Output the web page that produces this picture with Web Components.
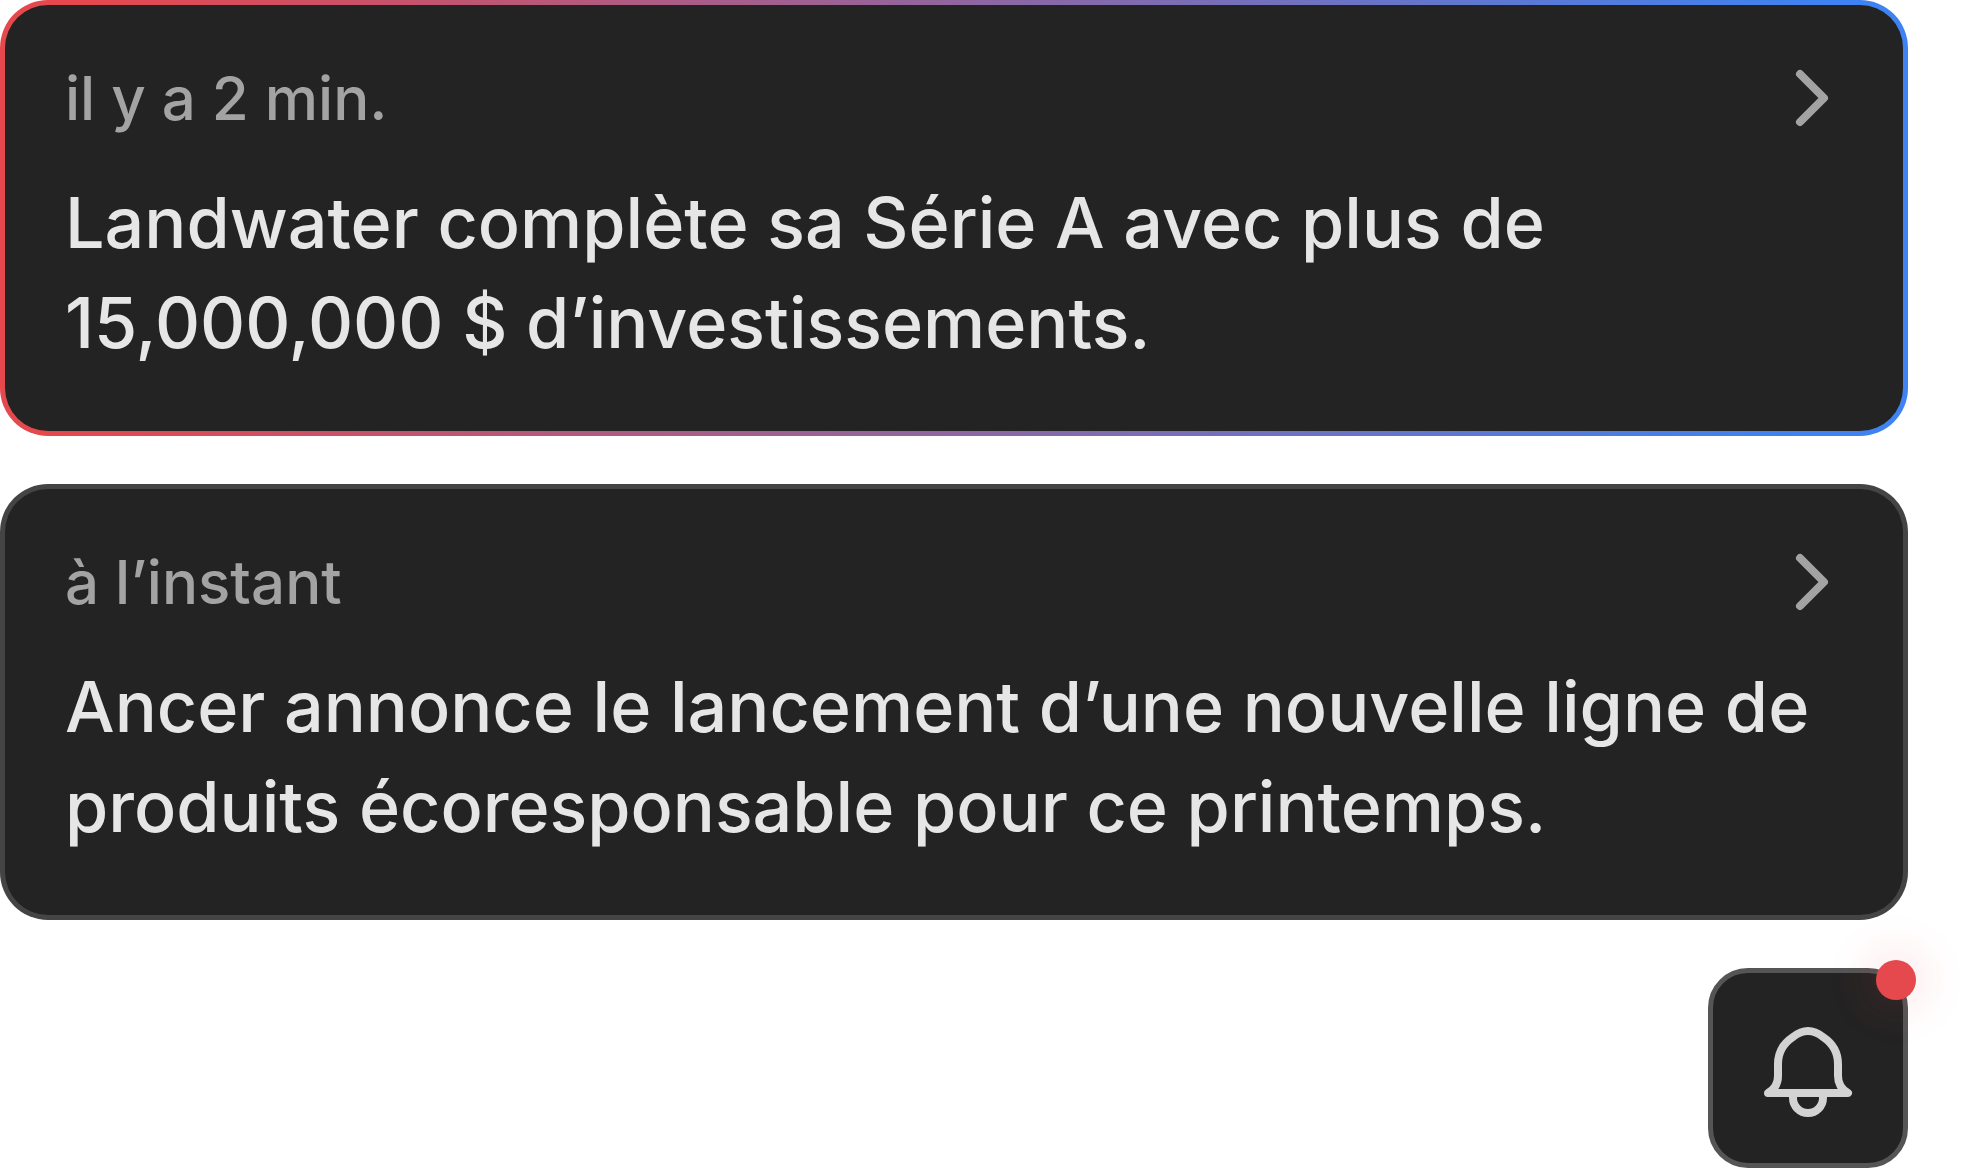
<!DOCTYPE html>
<html lang="fr">
<head>
<meta charset="utf-8">
<meta name="viewport" content="width=device-width, initial-scale=1">
<title>Notifications</title>
<style>
  body { margin: 0; background: #fff; font-family: Inter, "Liberation Sans", sans-serif; }
</style>
</head>
<body>
<notification-stack>
  <notification-card highlighted>
    <span slot="time">il y a 2 min.</span>
    Landwater complète sa Série A avec plus de 15,000,000 $ d’investissements.
  </notification-card>
  <notification-card>
    <span slot="time">à l’instant</span>
    Ancer annonce le lancement d’une nouvelle ligne de produits écoresponsable pour ce printemps.
  </notification-card>
  <notification-bell slot="action"></notification-bell>
</notification-stack>

<script>
  const define = (name, markup) => {
    const template = document.createElement('template');
    template.innerHTML = markup;
    customElements.define(name, class extends HTMLElement {
      constructor() {
        super();
        this.attachShadow({ mode: 'open' }).append(template.content.cloneNode(true));
      }
    });
  };

  define('notification-stack', `
    <style>
      :host { display: block; padding-right: 58px; }
      main { display: flex; flex-direction: column; gap: 48px; }
      footer { display: flex; justify-content: flex-end; }
    </style>
    <main>
      <slot></slot>
      <footer><slot name="action"></slot></footer>
    </main>`);

  define('notification-card', `
    <style>
      :host { display: block; --edge: linear-gradient(#444, #444); }
      :host([highlighted]) { --edge: linear-gradient(94deg, #e5484d 4%, #3e83f1 94%); }
      a {
        display: flex; flex-direction: column; gap: 42px;
        padding: 60px 60px 58px;
        border: 5px solid transparent; border-radius: 48px;
        background: linear-gradient(#232323, #232323) padding-box, var(--edge) border-box;
        color: #e6e6e6; text-decoration: none;
      }
      header {
        display: flex; justify-content: space-between; align-items: center;
        color: #a3a3a3; font-size: 60px; font-weight: 500; line-height: 66px;
      }
      p { margin: 0; font-size: 70px; font-weight: 500; line-height: 100px; }
      svg { display: block; width: 60px; height: 60px; }
    </style>
    <a href="#">
      <header>
        <slot name="time"></slot>
        <svg viewBox="0 0 60 60" fill="none" stroke="currentColor" stroke-width="8" stroke-linecap="round" stroke-linejoin="round" aria-hidden="true">
          <path d="M17 6 41 30 17 54"/>
        </svg>
      </header>
      <p><slot></slot></p>
    </a>`);

  define('notification-bell', `
    <style>
      :host { display: block; position: relative; }
      button {
        display: grid; place-items: center; width: 200px; height: 200px; padding: 0;
        border: 5px solid #555; border-radius: 40px; background: #232323; color: #d3d3d3;
      }
      svg { display: block; width: 120px; height: 120px; }
      .dot {
        position: absolute; top: -8px; right: -8px; width: 40px; height: 40px;
        border-radius: 50%; background: #e5484d;
        box-shadow: 0 0 36px 18px rgb(229 72 77 / 8%);
      }
    </style>
    <button type="button" aria-label="Notifications">
      <svg viewBox="0 0 120 120" fill="none" stroke="currentColor" stroke-width="8" stroke-linecap="round" stroke-linejoin="round" aria-hidden="true">
        <path d="M20 85C27 81 30 75 30 68V56C30 43 36 35 45 29C55 21 65 21 75 29C84 35 90 43 90 56V68C90 75 93 81 100 85Z"/>
        <path d="M45 86V90A15 15 0 0 0 75 90V86"/>
      </svg>
    </button>
    <span class="dot"></span>`);
</script>
</body>
</html>
